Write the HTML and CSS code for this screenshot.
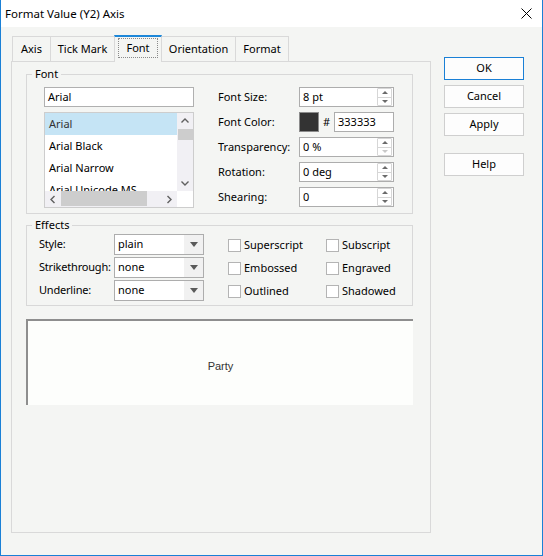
FILE: index.html
```html
<!DOCTYPE html>
<html lang="en">
<head>
    <meta charset="UTF-8">
    <meta name="viewport" content="width=device-width, initial-scale=1.0">
    <title>Format Value (Y2) Axis</title>
    <link rel="stylesheet" href="styles.css">
</head>
<body>
    <div class="window">
        <div class="titlebar">
            <span class="title">Format Value (Y2) Axis</span>
            <svg class="close" width="11" height="11" viewBox="0 0 11 11">
                <path d="M0.5 0.5 L10.5 10.5 M10.5 0.5 L0.5 10.5" stroke="#000" stroke-width="1" fill="none"/>
            </svg>
        </div>

        <div class="content">
            <div class="main">
                <div class="tabs">
                    <div class="tab tab-axis">Axis</div>
                    <div class="tab tab-tick">Tick Mark</div>
                    <div class="tab tab-font active"><span class="focus">Font</span></div>
                    <div class="tab tab-orient">Orientation</div>
                    <div class="tab tab-format">Format</div>
                </div>

                <div class="panel">
                    <fieldset class="group">
                        <legend>Font</legend>
                        <div class="font-inner">
                            <div class="font-pick">
                                <div class="textbox">Arial</div>
                                <div class="listbox">
                                    <div class="list-items">
                                        <div class="item selected">Arial</div>
                                        <div class="item">Arial Black</div>
                                        <div class="item">Arial Narrow</div>
                                        <div class="item">Arial Unicode MS</div>
                                    </div>
                                    <div class="vscroll">
                                        <svg width="16" height="16" viewBox="0 0 16 16"><path d="M4.5 9.5 L8 6 L11.5 9.5" stroke="#606060" stroke-width="1.4" fill="none"/></svg>
                                        <div class="vthumb"></div>
                                        <div class="vspace"></div>
                                        <svg width="16" height="16" viewBox="0 0 16 16"><path d="M4.5 6.5 L8 10 L11.5 6.5" stroke="#606060" stroke-width="1.4" fill="none"/></svg>
                                    </div>
                                    <div class="hscroll">
                                        <svg width="16" height="15" viewBox="0 0 16 15"><path d="M9.5 4 L6 7.5 L9.5 11" stroke="#606060" stroke-width="1.4" fill="none"/></svg>
                                        <div class="hthumb"></div>
                                        <div class="hspace"></div>
                                        <svg width="16" height="15" viewBox="0 0 16 15"><path d="M6.5 4 L10 7.5 L6.5 11" stroke="#606060" stroke-width="1.4" fill="none"/></svg>
                                    </div>
                                    <div class="corner"></div>
                                </div>
                            </div>

                            <div class="props">
                                <div class="prop-row">
                                    <span class="prop-label">Font Size:</span>
                                    <div class="spin">
                                        <span class="spin-val">8 pt</span>
                                        <span class="spin-btns"><span class="up"></span><span class="down"></span></span>
                                    </div>
                                </div>
                                <div class="prop-row">
                                    <span class="prop-label">Font Color:</span>
                                    <div class="color-pick">
                                        <span class="swatch"></span>
                                        <span class="hash">#</span>
                                        <span class="hexbox">333333</span>
                                    </div>
                                </div>
                                <div class="prop-row">
                                    <span class="prop-label">Transparency:</span>
                                    <div class="spin">
                                        <span class="spin-val">0 %</span>
                                        <span class="spin-btns"><span class="up"></span><span class="down off"></span></span>
                                    </div>
                                </div>
                                <div class="prop-row">
                                    <span class="prop-label">Rotation:</span>
                                    <div class="spin">
                                        <span class="spin-val">0 deg</span>
                                        <span class="spin-btns"><span class="up"></span><span class="down"></span></span>
                                    </div>
                                </div>
                                <div class="prop-row">
                                    <span class="prop-label">Shearing:</span>
                                    <div class="spin">
                                        <span class="spin-val">0</span>
                                        <span class="spin-btns"><span class="up"></span><span class="down"></span></span>
                                    </div>
                                </div>
                            </div>
                        </div>
                    </fieldset>

                    <fieldset class="group effects">
                        <legend>Effects</legend>
                        <div class="effects-inner">
                            <span class="eff-label">Style:</span>
                            <div class="combo-cell"><div class="combo"><span class="combo-val">plain</span><span class="combo-arrow"></span></div></div>
                            <label class="check"><span class="box"></span>Superscript</label>
                            <label class="check"><span class="box"></span>Subscript</label>

                            <span class="eff-label">Strikethrough:</span>
                            <div class="combo-cell"><div class="combo"><span class="combo-val">none</span><span class="combo-arrow"></span></div></div>
                            <label class="check"><span class="box"></span>Embossed</label>
                            <label class="check"><span class="box"></span>Engraved</label>

                            <span class="eff-label">Underline:</span>
                            <div class="combo-cell"><div class="combo"><span class="combo-val">none</span><span class="combo-arrow"></span></div></div>
                            <label class="check"><span class="box"></span>Outlined</label>
                            <label class="check"><span class="box"></span>Shadowed</label>
                        </div>
                    </fieldset>

                    <div class="preview">Party</div>
                </div>
            </div>

            <div class="buttons">
                <button class="btn default">OK</button>
                <button class="btn">Cancel</button>
                <button class="btn">Apply</button>
                <button class="btn help">Help</button>
            </div>
        </div>
    </div>
</body>
</html>
```

FILE: styles.css
```css
* {
    box-sizing: border-box;
}

body {
    margin: 0;
    font-family: "Noto Sans", "Liberation Sans", sans-serif;
    font-size: 11px;
    color: #000;
}

.window {
    width: 543px;
    height: 556px;
    background-color: #f4f5f3;
    border: 1px solid #1a80d6;
    border-top: none;
    display: flex;
    flex-direction: column;
}

.titlebar {
    height: 27px;
    background-color: #fff;
    display: flex;
    align-items: center;
    justify-content: space-between;
    padding: 0 10px 0 4px;
    font-size: 11.5px;
}

.close {
    display: block;
}

.content {
    display: flex;
    padding: 8px 0 0 10px;
}

/* tabs */
.tabs {
    display: flex;
    align-items: flex-end;
    height: 26px;
    padding-left: 1px;
}

.tab {
    height: 25px;
    border: 1px solid #d9d9d9;
    border-bottom: none;
    margin-left: -1px;
    background-color: #f4f5f3;
    display: flex;
    align-items: center;
    justify-content: center;
    padding-bottom: 1px;
}

.tab:first-child {
    margin-left: 0;
}

.tab-axis { width: 39px; }
.tab-tick { width: 65px; }
.tab-font { width: 48px; }
.tab-orient { width: 75px; }
.tab-format { width: 54px; }

.tab.active {
    height: 27px;
    margin-bottom: -1px;
    border-top: 2px solid #1c87d9;
    position: relative;
    z-index: 1;
    padding: 1px 3px 4px;
    align-items: stretch;
}

.focus {
    flex: 1;
    border: 1px dotted #8a8a8a;
    display: flex;
    align-items: center;
    justify-content: center;
    padding-bottom: 2px;
}

.panel {
    width: 420px;
    height: 472px;
    border: 1px solid #d9d9d9;
    padding: 4px 0 0 14px;
}

/* group boxes */
.group {
    margin: 0;
    padding: 0;
    width: 387px;
    min-width: 0;
    border: 1px solid #d8d8d8;
}

.group legend {
    margin-left: 5px;
    padding: 0 3px;
    height: 16px;
    line-height: 15px;
}

.font-inner {
    display: flex;
    padding: 5px 18px 5px 17px;
}

.font-pick {
    width: 150px;
    display: flex;
    flex-direction: column;
    gap: 5px;
}

.textbox {
    height: 20px;
    border: 1px solid #b0b0b0;
    background-color: #fff;
    padding-left: 3px;
    line-height: 17px;
}

.listbox {
    height: 96px;
    border: 1px solid #cdcdcd;
    background-color: #fff;
    display: grid;
    grid-template-columns: 132px 16px;
    grid-template-rows: 78px 16px;
}

.list-items {
    overflow: hidden;
}

.item {
    height: 22px;
    line-height: 21px;
    padding-left: 4px;
    white-space: nowrap;
}

.item.selected {
    background-color: #c5e4f5;
    color: #333;
}

.vscroll {
    background-color: #f1f0f4;
    display: flex;
    flex-direction: column;
}

.vscroll svg, .hscroll svg {
    display: block;
    flex: none;
}

.vthumb {
    height: 11px;
    margin: 0 0 0 1px;
    background-color: #cdcdcd;
}

.vspace, .hspace {
    flex: 1;
}

.hscroll {
    background-color: #f1f0f4;
    display: flex;
    padding-top: 1px;
}

.hthumb {
    width: 86px;
    height: 15px;
    margin-top: -1px;
    background-color: #cdcdcd;
}

.corner {
    background-color: #fff;
}

.props {
    margin-left: 24px;
    display: flex;
    flex-direction: column;
    gap: 5px;
}

.prop-row {
    display: flex;
    align-items: center;
    height: 20px;
}

.prop-label {
    width: 81px;
    padding-bottom: 2px;
}

.spin {
    width: 95px;
    height: 20px;
    border: 1px solid #adadad;
    background-color: #fff;
    display: flex;
}

.spin-val {
    flex: 1;
    padding-left: 3px;
    line-height: 17px;
}

.spin-btns {
    width: 15px;
    margin-right: 1px;
    border: 1px solid #d6d6d6;
    border-radius: 1px;
    display: flex;
    flex-direction: column;
}

.spin-btns span {
    flex: 1;
    display: flex;
    align-items: center;
    justify-content: center;
}

.spin-btns .down {
    border-top: 1px solid #d6d6d6;
}

.spin-btns .up::after,
.spin-btns .down::after {
    content: "";
    border-left: 3px solid transparent;
    border-right: 3px solid transparent;
}

.spin-btns .up::after {
    border-bottom: 3px solid #6a6a6a;
}

.spin-btns .down::after {
    border-top: 3px solid #6a6a6a;
}

.spin-btns .down.off::after {
    border-top-color: #c8c8c8;
}

.color-pick {
    display: flex;
    align-items: center;
    width: 95px;
}

.swatch {
    width: 20px;
    height: 20px;
    border: 1px solid #8c8c8c;
    background-color: #333333;
}

.hash {
    width: 15px;
    text-align: center;
    padding-bottom: 2px;
}

.hexbox {
    width: 60px;
    height: 20px;
    border: 1px solid #adadad;
    background-color: #fff;
    padding-left: 3px;
    line-height: 17px;
}

/* effects */
.effects {
    margin-top: 3px;
}

.effects-inner {
    display: grid;
    grid-template-columns: 75px 114px 98px 1fr;
    grid-auto-rows: 21px;
    row-gap: 2px;
    align-items: center;
    padding: 1px 12px 4px 12px;
}

.eff-label {
    white-space: nowrap;
    letter-spacing: -0.2px;
    padding-bottom: 2px;
}

.combo {
    width: 90px;
    height: 21px;
    border: 1px solid #adadad;
    background-color: #fff;
    display: flex;
}

.combo-val {
    flex: 1;
    padding-left: 3px;
    line-height: 18px;
}

.combo-arrow {
    width: 19px;
    background-color: #f1f1f1;
    display: flex;
    align-items: center;
    justify-content: center;
}

.combo-arrow::after {
    content: "";
    border-left: 4px solid transparent;
    border-right: 4px solid transparent;
    border-top: 5px solid #5a5a5a;
}

.check {
    display: flex;
    align-items: center;
    gap: 3px;
}

.check .box {
    width: 13px;
    height: 13px;
    border: 1px solid #b4b4b4;
    background-color: #fff;
    margin-top: 1px;
}

.preview {
    margin-top: 13px;
    width: 387px;
    height: 86px;
    border-top: 2px solid #8e8e8e;
    border-left: 2px solid #8e8e8e;
    background-color: #fdfefc;
    display: flex;
    align-items: center;
    justify-content: center;
    padding-top: 5px;
    font-family: "Liberation Sans", Arial, sans-serif;
    font-size: 11px;
    color: #333;
}

/* side buttons */
.buttons {
    margin-left: 13px;
    padding-top: 22px;
    display: flex;
    flex-direction: column;
    gap: 5px;
}

.btn {
    width: 80px;
    height: 23px;
    border: 1px solid #cfcfcf;
    background-color: #fdfdfd;
    font-family: inherit;
    font-size: 11px;
    color: #000;
    padding: 0 0 2px;
}

.btn.default {
    border-color: #1a80d6;
}

.btn.help {
    margin-top: 12px;
}
```
